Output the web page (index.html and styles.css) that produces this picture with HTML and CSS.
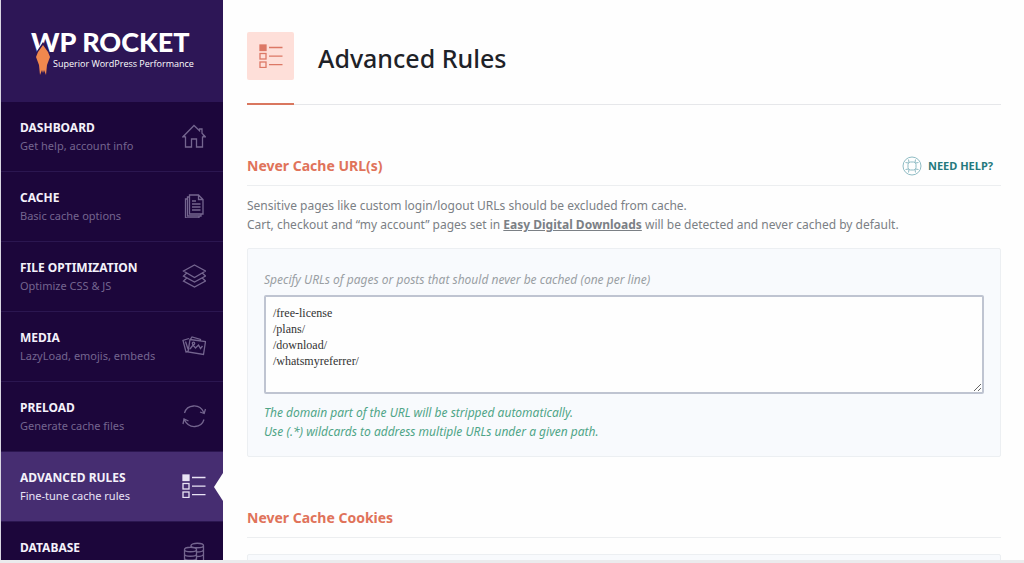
FILE: index.html
```html
<!DOCTYPE html>
<html lang="en">
<head>
<meta charset="utf-8">
<title>Advanced Rules – WP Rocket</title>
<link rel="stylesheet" href="styles.css">
</head>
<body>
<svg class="defs" aria-hidden="true">
  <symbol id="rules" viewBox="0 0 24 24">
    <rect x="1" y="1" width="6" height="5.500" fill="currentColor"/>
    <rect x="1" y="9.500" width="6" height="5.500"/>
    <rect x="1" y="18" width="6" height="5.500"/>
    <path d="M10 3.500h13.500M10 12.200h13.500M10 20.700h13.500"/>
  </symbol>
</svg>
<div class="app">
  <nav class="sidebar">
    <div class="brand">
      <div class="logo">
        <span class="logo-name">WP ROCKET</span>
        <span class="logo-tag">Superior WordPress Performance</span>
        <svg class="logo-rocket" viewBox="0 0 16 34" aria-hidden="true">
          <path d="M8 0L2 9L0 16L2 24L3 33L6 28L8 33L10 28L13 33L14 24L16 16L14 9Z" fill="#2d1656"/>
          <path d="M8 3L3 10L1 15L4 23L5 33L7 28L8 31L9 28L11 33L12 23L15 15L13 10Z" fill="#f0884e"/>
        </svg>
      </div>
    </div>
    <a class="item" href="#dashboard">
      <span class="item-text"><span class="item-title">DASHBOARD</span><span class="item-sub">Get help, account info</span></span>
      <svg class="icon" viewBox="0 0 24 24"><path d="M3.500 12.500V23H9.500v-8h5v8h6V12.500M3.500 12.500L1 12.700 12 1.500l5.500 5.200V5H20v4.200l3.300 3.500-2.800-.2"/></svg>
    </a>
    <a class="item" href="#cache">
      <span class="item-text"><span class="item-title">CACHE</span><span class="item-sub">Basic cache options</span></span>
      <svg class="icon" viewBox="0 0 24 24"><path d="M7.500 1h9L21 5.500V20H7.500zM16.500 1v4.500H21M7.500 3H5.500v19H19v-2M5.500 5H3.500v18.800H17V22M10 7h4M10 10h8.500M10 13h8.500M10 16h8.500"/></svg>
    </a>
    <a class="item" href="#files">
      <span class="item-text"><span class="item-title">FILE OPTIMIZATION</span><span class="item-sub">Optimize CSS &amp; JS</span></span>
      <svg class="icon" viewBox="0 0 24 24"><path d="M12.500 1L23.500 7l-11 6.500L1.500 7zM4.500 9.200L1.500 12l11 6 11-6-3-2.800M4.500 14.200L1.500 17l11 6 11-6-3-2.800"/></svg>
    </a>
    <a class="item" href="#media">
      <span class="item-text"><span class="item-title">MEDIA</span><span class="item-sub">LazyLoad, emojis, embeds</span></span>
      <svg class="icon" viewBox="0 0 24 24"><path d="M8 5.500l15.500 2-2 13-15.500-2.500zM6.500 17.500L4 18 1 6.500l6-2M7 14.500l-1.500 3.700M8.500 5.200L10 3l8.500 2.500v1.200M3.500 7.500L6 15M8 15l3-4 2.500 3 3-3 2 3.500 2-2.500"/><circle cx="11.500" cy="9.300" r="1.200"/></svg>
    </a>
    <a class="item" href="#preload">
      <span class="item-text"><span class="item-title">PRELOAD</span><span class="item-sub">Generate cache files</span></span>
      <svg class="icon" viewBox="0 0 24 24"><path d="M2.500 9C5 .5 17.500-1 21.800 8.500M23.500 5l-1.300 4.500L18 8M22 15.500C19.500 24 7 25.500 2.500 16M1 20l1-5 4.500 2"/></svg>
    </a>
    <a class="item item-active" href="#rules-page" aria-current="page">
      <span class="item-text"><span class="item-title">ADVANCED RULES</span><span class="item-sub">Fine-tune cache rules</span></span>
      <svg class="icon"><use href="#rules"/></svg>
    </a>
    <a class="item item-last" href="#database">
      <span class="item-title">DATABASE</span>
      <svg class="icon" viewBox="0 0 24 24"><path d="M9 5V3.500C9 .5 21.500.5 21.500 3.500v16c0 2-3 2.500-6 2.500M9 3.500c0 3 12.500 3 12.500 0M14.500 10c3.500 0 7-.5 7-2.500M14.500 14.500c3.500 0 7-.5 7-2.500M2.500 7.500c0-3 12-3 12 0v13c0 3-12 3-12 0zM2.500 7.500c0 3 12 3 12 0M2.500 12c0 3 12 3 12 0M2.500 16c0 3 12 3 12 0"/></svg>
    </a>
  </nav>
  <main class="content">
    <header class="page-head">
      <span class="page-badge"><svg class="icon"><use href="#rules"/></svg></span>
      <h1 class="page-title">Advanced Rules</h1>
    </header>
    <section class="section">
      <div class="section-head">
        <h2 class="section-title">Never Cache URL(s)</h2>
        <a class="help" href="#help">
          <svg class="help-icon" viewBox="0 0 20 20"><circle cx="10" cy="10" r="9"/><rect x="6" y="6" width="8" height="8" rx="2.500"/><path d="M3.500 6.500l3 .5M6.500 3.500l.5 3M16.500 6.500l-3 .5M13.500 3.500l-.5 3M3.500 13.500l3-.5M6.500 16.500l.5-3M16.500 13.500l-3-.5M13.500 16.500l-.5-3"/></svg>
          NEED HELP?
        </a>
      </div>
      <p class="intro">Sensitive pages like custom login/logout URLs should be excluded from cache.<br>Cart, checkout and “my account” pages set in <a class="intro-link" href="#edd">Easy Digital Downloads</a> will be detected and never cached by default.</p>
      <div class="panel">
        <label class="field-label" for="urls">Specify URLs of pages or posts that should never be cached (one per line)</label>
        <textarea class="field" id="urls" rows="5" spellcheck="false">/free-license
/plans/
/download/
/whatsmyreferrer/</textarea>
        <p class="hint">The domain part of the URL will be stripped automatically.<br>Use (.*) wildcards to address multiple URLs under a given path.</p>
      </div>
    </section>
    <section class="section">
      <div class="section-head">
        <h2 class="section-title">Never Cache Cookies</h2>
      </div>
      <div class="panel panel-next"></div>
    </section>
  </main>
</div>
</body>
</html>
```
FILE: styles.css
```css
* { box-sizing: border-box; }
body {
  margin: 0;
  height: 100vh;
  overflow: hidden;
  background: #ebebed;
  font: 12px/19px "Noto Sans", "Open Sans", sans-serif;
  color: #7b8085;
}
h1, h2, p { margin: 0; }
a { color: inherit; text-decoration: none; }
.defs { position: absolute; width: 0; height: 0; }
svg { fill: none; stroke: currentColor; }
.app {
  display: flex;
  height: calc(100vh - 3px);
  overflow: hidden;
  background: #fefefe;
  border-left: 1px solid #d9d6e2;
}
.sidebar { flex: none; width: 222px; background: #1c063b; }
.brand { height: 102px; padding: 28px 0 0 30px; background: #2d1656; }
.logo {
  position: relative;
  display: flex;
  flex-direction: column;
  color: #fff;
  white-space: nowrap;
}
.logo-name { font: 900 27px/28px Lato, sans-serif; }
.logo-tag { padding-left: 22px; font: 500 9px/16px "Open Sans", sans-serif; }
.logo-rocket { position: absolute; left: 4px; top: 14px; width: 16px; height: 34px; stroke: none; }
.item {
  position: relative;
  display: flex;
  justify-content: space-between;
  align-items: center;
  height: 70px;
  padding: 0 17px 0 19px;
  border-bottom: 1px solid #2b1650;
  color: #74658f;
}
.item-text { display: flex; flex-direction: column; line-height: 18px; }
.item-title { font-weight: 700; color: #f4f1fa; }
.item-sub { font-size: 11px; }
.item .icon { stroke-width: 1.3; margin-bottom: 2px; }
.item-last { align-items: flex-start; padding-top: 16px; }
.item-last .icon { margin-top: 4px; }
.icon { width: 24px; height: 24px; }
.item-active { background: #462d71; color: #e9e3f5; }
.item-active::after {
  content: "";
  position: absolute;
  right: 0;
  top: 21px;
  border: solid transparent;
  border-width: 14px 9px 14px 0;
  border-right-color: #fefefe;
}
.content { flex: 1; min-width: 0; padding: 32px 23px 0 24px; }
.page-head {
  position: relative;
  display: flex;
  align-items: center;
  gap: 24px;
  padding-bottom: 24px;
  border-bottom: 1px solid #e6e7ea;
}
.page-head::after {
  content: "";
  position: absolute;
  left: 0;
  bottom: -1px;
  width: 47px;
  height: 2px;
  background: #d9775f;
}
.page-badge {
  display: flex;
  align-items: center;
  justify-content: center;
  width: 47px;
  height: 48px;
  border-radius: 2px;
  background: #fedfd9;
  color: #dc7866;
}
.page-badge .icon { stroke-width: 1.3; }
.page-title { padding-top: 3px; font-size: 25px; line-height: 36px; font-weight: 500; color: #1e2228; }
.section-head {
  display: flex;
  justify-content: space-between;
  align-items: center;
  height: 40px;
  padding-right: 8px;
  border-bottom: 1px solid #eceef0;
}
.section { padding-top: 41px; }
.section-title { font-size: 14px; line-height: 20px; font-weight: 700; color: #e0735a; }
.help { display: flex; align-items: center; gap: 6px; font-size: 11px; font-weight: 700; color: #24797d; }
.help-icon { width: 20px; height: 20px; color: #8fbcc4; }
.intro { padding: 10px 0 14px; }
.intro-link { font-weight: 700; text-decoration: underline; }
.panel {
  padding: 21px 16px 15px;
  border: 1px solid #eceff2;
  border-radius: 2px;
  background: #f8fafd;
}
.field-label { display: block; font-style: italic; color: #9a9fa4; }
.field {
  display: block;
  width: 100%;
  height: 99px;
  margin: 6px 0 9px;
  padding: 8px 7px;
  border: 2px solid #bfc4d1;
  border-radius: 2px;
  outline: 0;
  background: #fefefe;
  color: #333;
  font: 12px/16px "Liberation Serif", serif;
  resize: vertical;
}
.hint { font-style: italic; color: #4fa587; }
.panel-next { height: 80px; margin-top: 16px; }
```
